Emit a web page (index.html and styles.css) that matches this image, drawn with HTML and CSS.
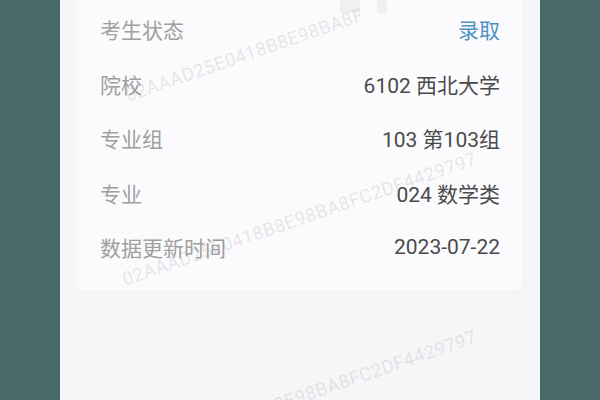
FILE: index.html
```html
<!DOCTYPE html>
<html lang="zh">
<head>
<meta charset="utf-8">
<link rel="stylesheet" href="styles.css">
</head>
<body>
<div class="frame">
  <div class="side"></div>
  <div class="screen">
    <div class="card">
      <div class="row"><span class="label">考生状态</span><span class="value status">录取</span></div>
      <div class="row"><span class="label">院校</span><span class="value">6102 西北大学</span></div>
      <div class="row"><span class="label">专业组</span><span class="value">103 第103组</span></div>
      <div class="row"><span class="label">专业</span><span class="value">024 数学类</span></div>
      <div class="row"><span class="label">数据更新时间</span><span class="value">2023-07-22</span></div>
    </div>
    <div class="topmark a"></div>
    <div class="topmark b"></div>
    <div class="wm wm1">02AAAD25E0418B8E98BA8F</div>
    <div class="wm wm2">02AAAD25E0418B8E98BA8FC2DF4429797</div>
    <div class="wm wm3">02AAAD25E0418B8E98BA8FC2DF4429797</div>
  </div>
  <div class="side"></div>
</div>
</body>
</html>
```
FILE: styles.css
```css
html, body {
  margin: 0;
  padding: 0;
  width: 600px;
  height: 400px;
  overflow: hidden;
}
.frame {
  display: flex;
  width: 600px;
  height: 400px;
  font-family: "Roboto", "Noto Sans CJK SC", sans-serif;
}
.side {
  width: 60px;
  background: #496a68;
  flex: none;
}
.screen {
  position: relative;
  flex: 1;
  background: #f5f6f8;
  padding: 0 18px 0 15px;
  overflow: hidden;
}
.card {
  background: #fbfbfd;
  border-radius: 0 0 8px 8px;
  box-shadow: 0 1px 3px rgba(0,0,0,0.03);
  padding: 2px 22px 16px 25px;
}
.row {
  display: flex;
  justify-content: space-between;
  align-items: center;
  height: 54.5px;
  font-size: 21px;
}
.label {
  color: #a0a0a0;
}
.value {
  color: #4a4a4a;
}
.status {
  color: #4d92c2;
}
.wm {
  position: absolute;
  font-size: 18.5px;
  color: rgba(150,150,160,0.22);
  white-space: nowrap;
  transform-origin: left center;
  transform: rotate(-19deg);
  letter-spacing: 0.5px;
}
.wm1 { left: 66px; top: 85px; }
.wm2 { left: 63px; top: 269px; }
.wm3 { left: 63px; top: 447px; }
.topmark {
  position: absolute;
  top: 0;
  height: 13px;
  background: rgba(200,200,205,0.2);
}
.topmark.a { left: 280px; width: 20px; }
.topmark.b { left: 317px; width: 10px; }
```
